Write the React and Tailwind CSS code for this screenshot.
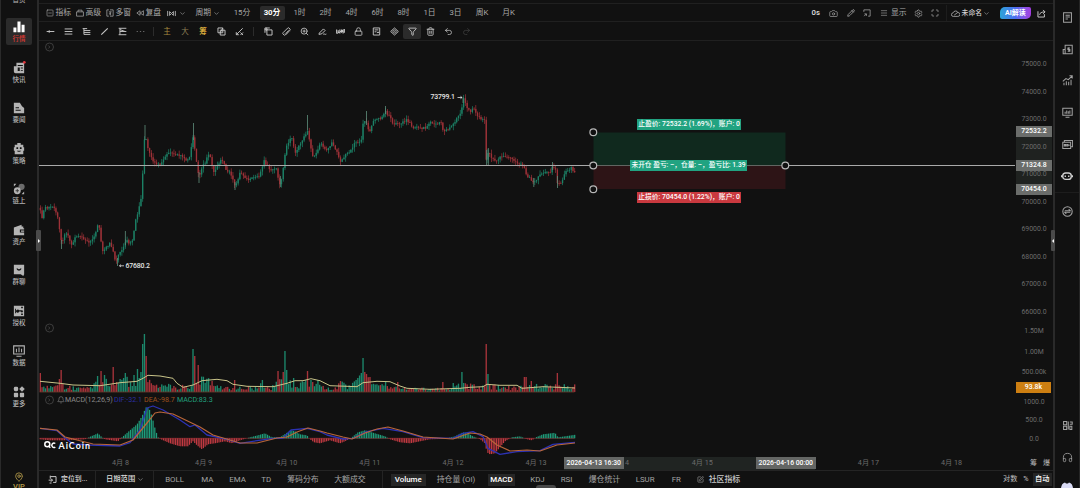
import React from 'react'
import {
  Bell, Camera, ChevronDown, Funnel, Headphones, Lock, MapPin, Maximize, Menu, Pencil,
  Redo2, Ruler, Settings, SquareMinus, SquarePen, Trash2, Undo2, ZoomIn,
} from 'lucide-react'

// ─── Helpers ──────────────────────────────────────────────────────────────────
const GREEN = '#1f9e7c'
const RED = '#c23a42'
const STEP = 1.735

const lerp = (pts, x) => {
  if (x <= pts[0][0]) return pts[0][1]
  for (let i = 1; i < pts.length; i++) {
    if (x <= pts[i][0]) {
      const [x0, y0] = pts[i - 1]
      const [x1, y1] = pts[i]
      return y0 + ((y1 - y0) * (x - x0)) / (x1 - x0)
    }
  }
  return pts[pts.length - 1][1]
}

const rand = (n) => {
  const v = Math.sin(n * 12.9898 + 4.137) * 43758.5453
  return v - Math.floor(v)
}

const toPoints = (pts) => pts.map((p) => p.join(',')).join(' ')

// ─── Series ───────────────────────────────────────────────────────────────────
const price = [
  [40, 208], [41.7, 218], [45, 207], [48, 209], [51.7, 205], [55, 208], [58, 220], [61.7, 245], [65, 232], [67.5, 234],
  [71.5, 246], [75, 238], [80, 236], [85, 240], [90, 242], [93, 238], [97.7, 226], [99.5, 227], [102, 251], [106.5, 247],
  [110, 242], [113, 252], [116, 262], [119, 253], [123, 248], [127, 240], [129, 245], [132.5, 240], [135, 223], [138, 213],
  [141.5, 195], [143, 167], [145, 127], [146.7, 146], [150, 153], [153, 161], [158, 165], [161.5, 163], [165, 156],
  [170, 153], [176.5, 155], [181.7, 156], [186.5, 161], [190, 156], [193.5, 133], [195.5, 157], [199, 179], [201.5, 168],
  [205, 163], [209.5, 152], [213.5, 172], [216.5, 167], [221.5, 158], [226, 169], [230, 173], [235, 186], [240, 173],
  [248, 180], [255, 176], [260, 175], [264, 161], [270, 170], [276, 168], [280, 185], [282.5, 173], [286, 147],
  [291.5, 137], [295.5, 153], [300, 143], [304, 137], [307.5, 131], [310, 145], [312.5, 157], [316.5, 152], [320.5, 143],
  [326, 152], [332.5, 142], [337, 152], [341, 162], [345, 155], [350, 152], [355, 143], [361.5, 140], [363.5, 120],
  [367, 123], [369, 135], [372.5, 122], [380, 118], [385.5, 112], [390, 117], [393, 124], [401.5, 124], [406.5, 119],
  [413, 127], [420, 128], [426.5, 128], [430, 123], [441, 123], [443.5, 131], [448, 129], [453.5, 123], [458, 117],
  [461.5, 111], [463.5, 99], [466.5, 107], [469.5, 112], [474, 108], [478.5, 118], [485, 119], [486, 160], [487.5, 152],
  [491.5, 157], [496.5, 161], [500, 156], [510, 157], [518.5, 163], [523.5, 166], [526.5, 175], [533.5, 183], [540, 175],
  [546.5, 171], [550.5, 173], [552.5, 166], [555.5, 168], [557.5, 185], [561.5, 183], [565, 172], [571.5, 168], [574.5, 173],
]

const longWicks = [
  [193.5, 123, 140], [307.5, 115, 130], [366.5, 111, 125], [385.5, 106, 114], [463, 97, 103], [486.6, 150, 166],
  [488.3, 148, 165], [199, 172, 183], [125.4, 231, 245], [61.5, 240, 249], [280.4, 176, 187], [117.5, 258, 266],
  [235, 182, 190], [552.5, 162, 170], [557.5, 176, 188], [533.8, 178, 187], [145, 125, 140],
]

const volumeBase = [
  [40, 6], [60, 7], [66, 6], [80, 3.5], [90, 4], [98, 10], [115, 10], [125, 11], [138, 13], [147, 10], [160, 6.5], [190, 5],
  [193, 13], [200, 12], [212, 10], [225, 4], [240, 5], [255, 4], [262, 9], [270, 4], [280, 10], [300, 9], [312, 9],
  [325, 4], [335, 5], [342, 9], [350, 5], [358, 13], [368, 14], [375, 7], [385, 6], [398, 4], [425, 3.5], [450, 4],
  [465, 8], [478, 5], [490, 6], [505, 5], [520, 4], [526, 9], [535, 6], [545, 6], [556, 6], [575, 6],
]

// x, height, 1 = up
const volumeSpikes = [
  [40, 19, 0], [60, 13, 0], [61.7, 22, 0], [98.3, 16, 1], [101.5, 21, 0], [104, 17, 1], [113.5, 25, 0], [120, 13, 1],
  [126, 19, 1], [134, 17, 1], [137, 23, 1], [141.2, 20, 1], [142.9, 48, 1], [144.6, 58, 1], [146.4, 36, 0],
  [193.5, 43, 1], [195.2, 36, 0], [198.5, 27, 0], [234, 12, 0], [262, 12, 1], [278, 21, 0], [283.6, 20, 0],
  [285.3, 41, 1], [287, 22, 1], [293, 14, 1], [307.5, 21, 0], [311, 12, 1], [318, 12, 1], [341, 11, 0], [357, 14, 1],
  [361, 19, 1], [362.7, 34, 1], [364.5, 20, 0], [366.5, 18, 0], [369.5, 15, 0], [385, 10, 1], [398, 10, 0], [443, 10, 0],
  [454, 9, 1], [461.7, 20, 1], [486, 48, 0], [487.8, 18, 1], [523.8, 15, 0], [525.5, 15, 0], [531, 11, 0], [557, 19, 0],
]

const volumeMa = [
  [40, 381.3], [60, 383.3], [73, 385], [100, 385.7], [120, 382.7], [137, 381.3], [143, 378.3], [148, 375.3], [160, 376],
  [173, 378.3], [177, 383.3], [183, 387.3], [193, 385], [202, 380.7], [217, 379.3], [227, 380.7], [233, 384.3],
  [247, 386.3], [273, 386.7], [287, 383.3], [295, 380.7], [303, 380.7], [311, 378.7], [320, 380.7], [330, 385.7],
  [357, 386.7], [363, 382.7], [377, 381.3], [390, 381.7], [400, 386], [407, 388.3], [430, 389.3], [460, 388.3],
  [470, 387.3], [483, 386.7], [487, 384.3], [500, 385.3], [517, 385.3], [522, 388.3], [543, 386.7], [575, 388],
]

const histogram = [
  [40, -1], [50, -2], [63, -2], [85, -1], [90, 1.5], [98, 5], [102, 1], [105, -1], [118, -3], [122, 1], [130, 8], [137, 14],
  [142, 22], [146, 31], [149, 30], [152, 22], [155, 10], [158, 1], [161, -1], [170, -5], [180, -8], [188, -8], [193, -3],
  [197, -7], [202, -11], [208, -6], [215, -5], [225, -3], [232, -5], [240, -2], [250, 1], [258, 3], [265, 5], [272, 1],
  [280, 1], [286, 5], [291, 8], [295, 7], [300, 4], [307, 3], [310, -1], [314, -4], [320, -5], [330, -2], [340, -5],
  [345, -3], [352, 1], [358, 6], [365, 8], [375, 5], [385, 2], [390, -1], [400, -4], [410, -5], [420, -3], [430, -1],
  [445, -0.5], [455, 2], [463, 6], [468, 5], [473, 2], [480, -1], [485, -5], [487, -14], [490, -16], [495, -15], [500, -9],
  [505, -3], [512, 1], [520, 2], [527, -1], [532, -2], [536, 1], [543, 4], [555, 5.5], [558, 1], [565, 2], [575, 3.5],
]

const dif = [
  [40, 428.3], [57, 430.7], [65, 438], [73, 444], [90, 445], [120, 446], [130, 442.7], [140, 430], [147, 408], [153, 406],
  [163, 410], [180, 420], [190, 426.7], [195, 425], [207, 435], [227, 439.3], [240, 443.3], [257, 440.7], [273, 438.3],
  [283, 438], [291, 430], [307, 428.3], [320, 431.7], [327, 435], [343, 439], [353, 438.3], [367, 431.7],
  [383, 428.3], [403, 431.7], [423, 437.7], [453, 438.3], [463, 433.3], [473, 431.7], [483, 436.7], [488, 448.3],
  [500, 454.3], [517, 451.7], [540, 450.7], [553, 444.3], [575, 442.3],
]

const dea = [
  [40, 428.3], [57, 430], [65, 437], [93, 444], [120, 445], [133, 440], [147, 423], [155, 413], [160, 412], [173, 414],
  [200, 427], [213, 435], [240, 443], [257, 443], [277, 438], [287, 437], [297, 432], [308, 428], [320, 431], [327, 433],
  [343, 437], [352, 439], [365, 433], [377, 429], [388, 427], [403, 431], [423, 437], [453, 439], [470, 433], [480, 434],
  [487, 437], [497, 445], [510, 451], [527, 450], [540, 451], [557, 445], [575, 443],
]

const bars = Array.from({ length: 309 }, (_, i) => {
  const x = 40.3 + i * STEP
  const open = lerp(price, x - STEP) + (rand(i) - 0.5) * 2.6
  const close = lerp(price, x) + (rand(i + 1) - 0.5) * 2.6
  const spike = volumeSpikes.find((s) => Math.abs(s[0] - x) < STEP / 2)
  const up = close <= open
  return {
    x,
    up,
    top: Math.min(open, close),
    bottom: Math.max(open, close),
    high: Math.min(open, close) - rand(i + 500) * 4.2,
    low: Math.max(open, close) + rand(i + 900) * 4.2,
    vol: spike ? spike[1] : lerp(volumeBase, x) * (0.4 + rand(i + 77) * 0.95),
    volUp: spike ? Boolean(spike[2]) : up,
    hist: lerp(histogram, x),
  }
})

// ─── Icons ────────────────────────────────────────────────────────────────────
const MiniIcon = ({ className = 'size-[9px]', width = 1.3, children }) => (
  <svg viewBox="0 0 14 14" fill="none" stroke="currentColor" strokeWidth={width} className={`shrink-0 ${className}`}>{children}</svg>
)

const AdvancedIcon = () => (
  <MiniIcon className="size-[8px]"><path d="M1 5h12v7.500H1zM3.500 5V2h7v3" /></MiniIcon>
)

const MultiIcon = () => (
  <MiniIcon className="size-[8px]"><path d="M5 1.500H1.500v11H5M7 1.500h5.500v11H7M5 5h5M5 8.500h4M7.500 5v6" /></MiniIcon>
)

const ReplayIcon = () => (
  <MiniIcon className="size-[8px]"><path d="M7 3L1.500 7L7 11zM13 3L7.500 7L13 11z" /></MiniIcon>
)

const CandleIcon = () => (
  <MiniIcon className="size-[9px]" width={1.5}><path d="M1 3v8M13 3v8M4 4v6l3-3zM10 4v6L7 7z" /></MiniIcon>
)

// ─── Left navigation ──────────────────────────────────────────────────────────
const navShapes = {
  market: <path d="M.5 7.500H4V13H.5zM5.200.5h3.600V13H5.200zM10 4.500h3.500V13H10z" />,
  news: (
    <>
      <path fillRule="evenodd" d="M4 1h9v12H3a2 2 0 0 1-2-2V5h3zM5.500 3.500v1.200h6V3.500zM5.500 6.500v4h2.400v-4zm3.600 0v1h2.400v-1zm0 3v1h2.400v-1z" />
      <circle cx="13.200" cy=".3" r="1.600" fill="#e0363c" />
    </>
  ),
  article: <path fillRule="evenodd" d="M1 1h7l2.500 4L13 7v6H1zM3 6v1.200h4V6zm0 3v1.200h6V9z" />,
  robot: <path fillRule="evenodd" d="M5 0h4v2h3v3h1v4h-1v4H2V9H1V5h1V2h3zM4 5v2h2V5zm4 0v2h2V5zM4.500 9c1 1.800 4 1.800 5 0z" />,
  chain: (
    <>
      <circle cx="10" cy="4.500" r="3.600" fill="#6c6c6c" />
      <circle cx="5" cy="9" r="4" />
      <path d="M1 1h3L1 4zM13 13h-3l3-3z" />
      <path d="M3 9h4M5 7v4" stroke="#333" strokeWidth="1" />
    </>
  ),
  wallet: <path fillRule="evenodd" d="M1 4l9-3v2h2v2h1v8H1zm7 2.500V10h5V6.500zm1.300 1.100h3.700v1.300H9.300z" />,
  chat: <path fillRule="evenodd" d="M1 1h12v11l-1 2-3-2H1zM4 5.600c1.500 3 4.500 3 6 0l-1-.6c-1 1.600-3 1.600-4 0z" />,
  grant: <path fillRule="evenodd" d="M1 1h12v12H1zM2.500 4.500v5h1v-5zm2.300.9a1.900 1.900 0 1 0 2.400 2.300H9l1.500 1.300 1.500-2-1.500-1H7.200a1.900 1.900 0 0 0-2.400-.6zM9.500 2v1.800h2V2zM9.500 10v1.600h2V10z" />,
  data: (
    <>
      <path d="M.8 1h12.400v9.500H.8z" fill="none" stroke="currentColor" strokeWidth="1.300" />
      <path d="M4 4.500v4M7 3v5.500M10 4.500v4M4 13h6" stroke="currentColor" strokeWidth="1.200" />
    </>
  ),
  more: (
    <>
      <rect x="1" y="1" width="5" height="5" rx="1.500" />
      <path d="M10.500.3l3.200 3.200-3.200 3.200-3.200-3.200z" />
      <rect x="1" y="8" width="5" height="5" rx="1" />
      <rect x="8" y="8" width="5" height="5" rx="1" />
    </>
  ),
}

const navItems = [
  ['market', '行情'], ['news', '快讯'], ['article', '要闻'], ['robot', '策略'], ['chain', '链上'],
  ['wallet', '资产'], ['chat', '群聊'], ['grant', '授权'], ['data', '数据'], ['more', '更多'],
]

const LeftNav = () => (
  <nav className="w-[37px] h-full shrink-0 border-l border-[#2a2a2a] flex flex-col items-center text-[#b4b4b4]">
    <div className="h-[18px] shrink-0 -mt-[7px] text-[6.500px] leading-[14px]">首页</div>
    <div className="flex flex-col mt-[7px] shrink-0">
      {navItems.map(([icon, label], i) => (
        <div
          key={icon}
          className={`w-[26px] h-[27px] mb-[13.500px] flex flex-col items-center rounded-[2px] ${i === 0 ? 'bg-[#2b2b2b] text-white' : ''}`}
        >
          <svg viewBox="0 0 14 14" fill="currentColor" className="size-[12px] mt-[3px] overflow-visible shrink-0">
            {navShapes[icon]}
          </svg>
          <span className={`text-[6.500px] leading-[9px] mt-[2px] font-medium ${i === 0 ? 'text-[#dc3a33]' : ''}`}>{label}</span>
        </div>
      ))}
    </div>
    <div className="mt-auto -mb-[3px] flex flex-col items-center text-[#b59b4a] shrink-0">
      <MapPin className="size-[10px]" strokeWidth={2} />
      <span className="text-[7.500px] leading-[9px] font-medium">VIP</span>
    </div>
  </nav>
)

// ─── Top toolbars ─────────────────────────────────────────────────────────────
const tools = [
  [<SquareMinus className="size-[8px]" strokeWidth={1.8} />, '指标', 'w-[30px]'],
  [<AdvancedIcon />, '高级', 'w-[30px]'],
  [<MultiIcon />, '多窗', 'w-[30px]'],
  [<ReplayIcon />, '复盘', 'w-[31px]'],
]

const periods = [
  ['15分', 'w-[31px]'], ['30分', 'w-[25px] mx-[2px] bg-[#2b2b2b] text-white font-bold rounded-[2px]'], ['1时', 'w-[26px]'],
  ['2时', 'w-[26px]'], ['4时', 'w-[26px]'], ['6时', 'w-[26px]'], ['8时', 'w-[26px]'], ['1日', 'w-[26px]'],
  ['3日', 'w-[26px]'], ['周K', 'w-[27px]'], ['月K', 'w-[26px]'],
]

const TopBar = () => (
  <div className="h-[19px] mt-[3px] pt-[1px] shrink-0 border-y border-[#202020] flex items-center justify-between text-[7.800px] text-[#a9a9a9] whitespace-nowrap">
    <div className="flex items-center pl-[6.500px] h-full">
      {tools.map(([icon, label, w]) => (
        <div key={label} className={`flex items-center gap-[2px] ${w}`}>
          {icon}
          {label}
        </div>
      ))}
      <div className="flex items-center gap-[3px] w-[29px]">
        <CandleIcon />
        <ChevronDown className="size-[7px]" />
      </div>
      <div className="flex items-center gap-[2px] w-[31px]">
        周期
        <ChevronDown className="size-[7px]" />
      </div>
      {periods.map(([label, cls]) => (
        <div key={label} className={`h-[14px] flex items-center justify-center ${cls}`}>{label}</div>
      ))}
    </div>
    <div className="flex items-center h-full pr-[7px]">
      <span className="w-[17.500px] font-medium text-[#dedede]">0s</span>
      <Camera className="size-[9px] mr-[9px]" strokeWidth={1.8} />
      <Pencil className="size-[8px] mr-[8px]" strokeWidth={2.4} />
      <MiniIcon className="size-[8px] mr-[9px]"><path d="M1.500 5V1.500h11v11H9M2 12.500l4-4M2.500 8.500H6V12" /></MiniIcon>
      <Menu className="size-[8px] mr-[3px]" strokeWidth={1.8} />
      显示
      <Settings className="size-[9px] ml-[7px] mr-[8px]" strokeWidth={1.8} />
      <Maximize className="size-[8px]" strokeWidth={2.2} />
      <div className="w-px h-full bg-[#1d1d1d] ml-[7px] mr-[4px]" />
      <MiniIcon className="size-[9px] mr-[2px]"><path d="M3.500 11.500a2.700 2.700 0 0 1-.3-5.400A4.200 4.200 0 0 1 11 5.500a3 3 0 0 1-.3 6zM5 9.500L11 5" /></MiniIcon>
      <span className="text-[6.800px] font-medium text-[#d2d2d2]">未命名</span>
      <ChevronDown className="size-[7px] ml-[1px]" />
      <div className="ml-[10px] mr-[6px] w-[31px] h-[12px] rounded-tl-[5px] rounded-br-[5px] rounded-tr-[2px] rounded-bl-[2px] bg-linear-to-r from-[#2aa3d8] via-[#4a6cf0] to-[#a43be0] text-white text-[7px] font-bold flex items-center justify-center">
        AI解读
      </div>
      <MiniIcon className="size-[9px] text-[#c8c8c8]" width={1.5}><path d="M1.500 3.500v9h10V8M4 9c.5-3 3-4.500 8.500-4.500M9.500 1.500l3 3-3 3" /></MiniIcon>
    </div>
  </div>
)

const lineTools = [
  <path d="M1 7h12M5 5v4" />,
  <path d="M1 3h12M1 7h12M1 11h12" />,
  <path d="M1 2.500h7M3 5.500h10M3 8.500h10M3 11.500h10M3 2.500v9" />,
  <path d="M2 12L12 2" strokeWidth="1.800" />,
  <path d="M1 2h12M3 2v10M3 7h10M1 12h12M3 4l8 3" />,
  <path d="M1 7h2M6 7h2M11 7h2" opacity=".5" />,
]

const DrawSlot = ({ children, active }) => (
  <div className={`w-[18px] h-[15px] flex items-center justify-center ${active ? 'bg-[#2b2b2b] rounded-[2px]' : ''}`}>{children}</div>
)

const DrawBar = () => (
  <div className="h-[19px] pt-[1px] shrink-0 border-b border-[#202020] flex items-center pl-[2px] text-[#c4c4c4] text-[7.500px]">
    {lineTools.map((shape, i) => (
      <DrawSlot key={i}>
        <MiniIcon width={1.5}>{shape}</MiniIcon>
      </DrawSlot>
    ))}
    <div className="w-px h-[9px] bg-[#2c2c2c] mx-[4px]" />
    <DrawSlot><span className="text-[#a88b3f]">主</span></DrawSlot>
    <DrawSlot><span className="text-[#8d7f55]">大</span></DrawSlot>
    <DrawSlot><span className="text-[#d6a93c] font-bold">筹</span></DrawSlot>
    <DrawSlot>
      <MiniIcon width={1.5}><path d="M1.500 1.500h7.500v7.500H1.500zM5 5h7.500v7.500H5zM9 1.500L5 9" /></MiniIcon>
    </DrawSlot>
    <DrawSlot>
      <MiniIcon width={1.5}><path d="M2 12L12 2M2 8v4h4M8.500 8.500l4 4M8.500 12.500l4-4" /></MiniIcon>
    </DrawSlot>
    <div className="w-px h-[9px] bg-[#2c2c2c] mx-[5px]" />
    <DrawSlot>
      <MiniIcon width={1.5}><path d="M4.500 4.500h8v8h-8zM1 3.500h5M3.500 1v5.500M9 1.500H1.500V9" /></MiniIcon>
    </DrawSlot>
    <DrawSlot><Ruler className="size-[9px] rotate-90" strokeWidth={2.4} /></DrawSlot>
    <DrawSlot><ZoomIn className="size-[9px]" strokeWidth={2.3} /></DrawSlot>
    <DrawSlot>
      <MiniIcon width={1.5}><path d="M2 9.500L8.500 3l2.500 2.500-5 5-4.500 1zM8 11.500c1.500-2 3 1 5-.5" /></MiniIcon>
    </DrawSlot>
    <DrawSlot>
      <MiniIcon width={1.7}><path d="M1 4v6M3.500 5v5M6 4v6M8.500 4v5M11 4v6M13 3v6M1 10L13 4" /></MiniIcon>
    </DrawSlot>
    <DrawSlot><Lock className="size-[9px]" strokeWidth={2.2} /></DrawSlot>
    <DrawSlot>
      <MiniIcon width={1.5}><path d="M2 1.500h10v11H2zM4 4.500h6M4 7.500h3M8 9.500l1.500-2 1.500 2" /></MiniIcon>
    </DrawSlot>
    <DrawSlot>
      <MiniIcon width={1.4}><path d="M1 7l6-5.500L13 7l-6 5.500zM7 4.500a2.500 2.500 0 1 0 .1 0zM7 6.500v1" /></MiniIcon>
    </DrawSlot>
    <DrawSlot active><Funnel className="size-[9px]" strokeWidth={2.4} /></DrawSlot>
    <DrawSlot><Trash2 className="size-[9px]" strokeWidth={2.3} /></DrawSlot>
    <DrawSlot><Undo2 className="size-[9px]" /></DrawSlot>
    <DrawSlot><Redo2 className="size-[9px] opacity-25" /></DrawSlot>
  </div>
)

// ─── Chart panes ──────────────────────────────────────────────────────────────
const PaneToggle = ({ cy }) => (
  <g fill="none" stroke="#474747" strokeWidth=".8">
    <circle cx="49.500" cy={cy} r="4" />
    <path d={`M48.300 ${cy - 1.5}l1.500 1.500l-1.500 1.500`} />
  </g>
)

const PriceTag = ({ className, children }) => (
  <div className={`absolute h-[11px] flex items-center justify-center font-medium text-white whitespace-nowrap ${className}`}>{children}</div>
)

const PricePane = () => (
  <div className="relative h-[281px] shrink-0 text-[6.800px]">
    <svg viewBox="39 41 976 281" className="w-[976px] h-[281px] block">
      <PaneToggle cy={47} />
      {bars.map((b) => (
        <g key={b.x} fill={b.up ? GREEN : RED} opacity=".8">
          <rect x={b.x - 0.3} y={b.high} width=".7" height={b.low - b.high} />
          <rect x={b.x - 0.65} y={b.top} width="1.350" height={Math.max(b.bottom - b.top, 0.8)} />
        </g>
      ))}
      {longWicks.map(([x, y0, y1]) => (
        <path key={x} d={`M${x} ${y0}V${y1}`} stroke="#5f8f7c" strokeWidth=".8" />
      ))}
      <rect x="593.500" y="132.500" width="192" height="33" fill="#10291e" />
      <rect x="593.500" y="165.500" width="192" height="23.500" fill="#2d1416" />
      <path d="M39 165.500h554M789 165.500h226" stroke="#a9a9a9" strokeWidth="1" />
      <path d="M597 165.500h185" stroke="#8f9a95" strokeWidth=".6" />
      <g fill="#111" stroke="#b8b8b8" strokeWidth="1.200">
        <circle cx="593.300" cy="132.300" r="3.400" />
        <circle cx="593.300" cy="165.500" r="3.400" />
        <circle cx="593.300" cy="189.200" r="3.400" />
        <circle cx="785.300" cy="165.500" r="3.400" />
      </g>
      <g fill="#e6e6e6" fontSize="6.900" fontWeight="500">
        <text x="430.500" y="99.300" textLength="24.500">73799.1</text>
        <text x="125.500" y="267.600" textLength="24.500">67680.2</text>
      </g>
      <path d="M457.500 97.500h4.500m-1.500-1.200l1.500 1.200l-1.500 1.200M124 265.800h-4.500m1.500-1.200l-1.500 1.200l1.500 1.200" fill="none" stroke="#e0e0e0" strokeWidth=".8" />
    </svg>
    <PriceTag className="left-[598px] top-[78px] w-[104px] bg-[#21a381]">止盈价: 72532.2 (1.69%)，账户: 0</PriceTag>
    <PriceTag className="left-[591px] top-[119px] w-[117px] bg-[#21a381] text-[6.700px]">未开仓 盈亏: –，仓量: –，盈亏比: 1.39</PriceTag>
    <PriceTag className="left-[598px] top-[150.500px] w-[104px] bg-[#c9393f]">止损价: 70454.0 (1.22%)，账户: 0</PriceTag>
  </div>
)

const VolumePane = () => (
  <svg viewBox="39 322 976 71" className="w-[976px] h-[71px] block shrink-0">
    <PaneToggle cy={328} />
    {bars.map((b) => (
      <rect key={b.x} x={b.x - 0.65} y={392 - b.vol} width="1.350" height={b.vol} fill={b.volUp ? GREEN : RED} opacity=".85" />
    ))}
    <path d="M39.500 392h535" stroke="#6b3a2c" strokeWidth=".8" />
    <polyline points={toPoints(volumeMa)} fill="none" stroke="#c9c489" strokeWidth="1" strokeLinejoin="round" />
  </svg>
)

const MacdPane = () => (
  <div className="relative h-[63px] shrink-0">
    <svg viewBox="39 393 976 63" className="w-[976px] h-[63px] block">
      <PaneToggle cy={400} />
      <path d="M39.500 438.300h535" stroke={RED} strokeWidth=".7" opacity=".7" />
      {bars.map((b) => (
        <rect
          key={b.x}
          x={b.x - 0.6}
          y={b.hist > 0 ? 438.3 - b.hist : 438.3}
          width="1.200"
          height={Math.abs(b.hist)}
          fill={b.hist > 0 ? GREEN : RED}
        />
      ))}
      <polyline points={toPoints(dif)} fill="none" stroke="#2c32b4" strokeWidth="1.300" strokeLinejoin="round" />
      <polyline points={toPoints(dea)} fill="none" stroke="#b8663a" strokeWidth="1.200" strokeLinejoin="round" />
      <g fill="none" stroke="#fff" strokeWidth="1.500">
        <circle cx="47.300" cy="444.300" r="2.500" />
        <path d="M48.500 446l1.800 1.800M55.300 443.500a2.200 2.200 0 1 0 0 3.600" />
      </g>
      <text x="58.500" y="449" fill="#fff" fontSize="8.800" fontWeight="700" fontFamily="Lato, Roboto, sans-serif" textLength="31.500">AiCoin</text>
    </svg>
    <div className="absolute left-[18px] top-[2px] h-[10px] flex items-center text-[7.100px] whitespace-nowrap text-[#8a8a8a]">
      <Bell className="size-[8px]" strokeWidth={1.8} />
      <span className="w-[49px]">MACD(12,26,9)</span>
      <span className="w-[30px] text-[#2a2fa0]">DIF:-32.1</span>
      <span className="w-[33px] text-[#a0521f]">DEA:-98.7</span>
      <span className="text-[#22a07e]">MACD:83.3</span>
    </div>
  </div>
)

// labels under the selected range give way to its two date tags
const days = [
  ['4月 8'], ['4月 9'], ['4月 10'], ['4月 11'], ['4月 12'], ['4月 13'], ['4', 'pl-[16px]'], ['4月 15'], [''], ['4月 17'], ['4月 18'],
]

const TimeAxis = () => (
  <div className="relative h-[14px] shrink-0 flex pl-[40px] text-[7.200px] text-[#6c6c6c]">
    <div className="absolute left-[525px] top-[0.500px] w-[251px] h-[13px] bg-[#202422]" />
    {days.map(([label, cls = ''], i) => (
      <div key={i} className={`relative w-[83.100px] pt-[1px] shrink-0 flex items-center justify-center ${cls}`}>{label}</div>
    ))}
    <PriceTag className="left-[525px] top-[1px] h-[12px] w-[59.500px] bg-[#646664] text-[6.800px]">2026-04-13 16:30</PriceTag>
    <PriceTag className="left-[717px] top-[1px] h-[12px] w-[59.500px] bg-[#646664] text-[6.800px]">2026-04-16 00:00</PriceTag>
  </div>
)

// ─── Value axis ───────────────────────────────────────────────────────────────
const priceLevels = ['75000.0', '74000.0', '73000.0', '72000.0', '71000.0', '70000.0', '69000.0', '68000.0', '67000.0', '66000.0']

const ValueAxis = () => (
  <div className="relative w-[38px] shrink-0 flex flex-col text-[6.900px] text-[#6c6c6c]">
    <div className="absolute left-[1px] top-[85px] w-[36px] h-[68px] bg-[#1f2220]" />
    <div className="relative h-[284px] pt-[9.500px] shrink-0">
      {priceLevels.map((p) => (
        <div key={p} className="h-[27.500px] flex items-center justify-center">{p}</div>
      ))}
    </div>
    <div className="h-[68px] -mt-[3.500px] shrink-0">
      {['1.50M', '1.00M', '500.00k'].map((v) => (
        <div key={v} className="h-[20.300px] flex items-center justify-center">{v}</div>
      ))}
    </div>
    <div className="h-[64px] pt-[3px] shrink-0">
      {['1000.0', '500.0', '0.0'].map((v) => (
        <div key={v} className="h-[18.500px] flex items-center justify-center">{v}</div>
      ))}
    </div>
    <div className="mt-auto h-[14px] flex items-center justify-center gap-[6px] pl-[12px] text-[7px] text-[#b8b8b8]">
      <span>筹</span>
      <span>爆</span>
    </div>
    <PriceTag className="left-[1px] top-[85px] w-[36px] bg-[#6b6d6b]">72532.2</PriceTag>
    <PriceTag className="left-[1px] top-[118.500px] w-[36px] bg-[#6b6d6b]">71324.8</PriceTag>
    <PriceTag className="left-[1px] top-[142.500px] w-[36px] bg-[#6b6d6b]">70454.0</PriceTag>
    <PriceTag className="left-[1px] top-[341px] w-[35px] bg-[#cd7f12]">93.8k</PriceTag>
  </div>
)

// ─── Indicator bar ────────────────────────────────────────────────────────────
const indicators = [
  ['BOLL', 'w-[36px]'], ['MA', 'w-[28px]'], ['EMA', 'w-[32px]'], ['TD', 'w-[26px]'], ['筹码分布', 'w-[47px]'], ['大额成交', 'w-[48px]'],
]

const subIndicators = [
  ['持仓量 (OI)', 'w-[51px]'], ['MACD', 'w-[27.500px] mr-[15px] justify-center bg-[#262626] text-white font-medium'],
  ['KDJ', 'w-[30.500px]'], ['RSI', 'w-[28px]'], ['爆仓统计', 'w-[47px]'], ['LSUR', 'w-[36px]'], ['FR', 'w-[25px]'],
]

const IndicatorBar = () => (
  <div className="relative h-[18px] shrink-0 border-t border-[#242424] flex items-center text-[7.900px] text-[#a4a4a4] whitespace-nowrap">
    <MiniIcon className="size-[9px] ml-[9px] mr-[4px] text-[#cfcfcf]" width={1.5}><path d="M4 2.500h8.500v9H8M3.500 5.500V1M1 8h6M4.500 5.500L7 8l-2.500 2.500M2.500 12.500h3" /></MiniIcon>
    <span className="w-[34px] font-medium text-[6.900px] text-[#dcdcdc]">定位到...</span>
    <div className="w-px h-full bg-[#242424]" />
    <span className="ml-[10px] text-[7.300px] font-medium text-[#dcdcdc]">日期范围</span>
    <ChevronDown className="size-[7px] ml-[2px] mr-[9px]" />
    <div className="w-px h-full bg-[#242424] mr-[11px]" />
    {indicators.map(([label, w]) => (
      <div key={label} className={`flex items-center shrink-0 ${w}`}>{label}</div>
    ))}
    <div className="w-px h-full bg-[#242424] mr-[7.500px]" />
    <div className="h-[12px] w-[35px] mr-[11px] flex items-center justify-center bg-[#262626] text-white font-medium">Volume</div>
    {subIndicators.map(([label, cls]) => (
      <div key={label} className={`h-[12px] flex items-center shrink-0 ${cls}`}>{label}</div>
    ))}
    <SquarePen className="size-[7px] mr-[5px]" />
    <span className="font-medium text-[#c8c8c8]">社区指标</span>
    <div className="ml-auto flex items-center text-[7.200px] text-[#c0c0c0]">
      <span className="mr-[6px]">对数</span>
      <span className="mr-[4px]">%</span>
      <span className="h-[13px] px-[2.500px] mr-[1px] flex items-center bg-[#242424] text-white font-medium">自动</span>
    </div>
    <div className="absolute left-[497px] bottom-0 w-[20px] h-[3px] rounded-t-[3px] bg-[#484848]" />
  </div>
)

// ─── Right rail ───────────────────────────────────────────────────────────────
const railIcons = [
  <path d="M2 1h10v12H2zM4.500 4h5.500M4.500 6.500h5.500M4.500 9h3" />,
  <path d="M4 1.500h9v11H1.500V7H4zM4 7v5.500M10 5H7.500v2H10v2.200H7.300M8.700 4v6" />,
  <path d="M2.500 13v-3M5.500 13V8M8.500 13V8.500M11.500 13V6M1 8l4-3.500 3 1.500 5-5M9.500 1H13v3.500" />,
  <path d="M1 1.500h12v9H1zM4 8.500V6M6 8.500V4.500M8 8.500V5.500M10 8.500V4.500M4.500 13h5" />,
  <path d="M1 4h10v8H1zM3 4V2h10.500v8H11M3 7h1.500v2H3zM6 7h1.500v2H6zM9 7v2" />,
]

const RightRail = () => (
  <aside className="w-[25px] h-full shrink-0 border-r border-[#262626] flex flex-col items-center text-[#a2a2a2]">
    <div className="flex flex-col items-center pt-[2px] shrink-0">
      {railIcons.map((shape, i) => (
        <div key={i} className="h-[31.600px] flex items-center justify-center">
          <MiniIcon className="size-[11px]">{shape}</MiniIcon>
        </div>
      ))}
      <div className="h-[31.600px] flex items-center justify-center text-[#d0d0d0]">
        <MiniIcon className="size-[12px]" width={1.6}>
          <rect x="2" y="3.500" width="10" height="7.500" rx="3.500" />
          <path d="M.6 6v2.500M13.400 6v2.500M5 6.300v1.800M9 6.300v1.800" />
        </MiniIcon>
      </div>
    </div>
    <div className="w-full h-px bg-[#1d1d1d] shrink-0" />
    <div className="h-[38px] flex items-center justify-center shrink-0">
      <MiniIcon className="size-[11px]">
        <circle cx="7" cy="7" r="6" />
        <path d="M3.500 6h7L8.500 4M10.500 8h-7l2 2" />
      </MiniIcon>
    </div>
    <div className="mt-auto h-[32px] flex items-center shrink-0">
      <MiniIcon className="size-[11px]"><path d="M2 2h4v4H2zM2 8h4v4H2zM8 2v10M10 2.500h3v3h-3M10 8h2.500v4H10z" /></MiniIcon>
    </div>
    <div className="h-[32px] flex items-center shrink-0">
      <Headphones className="size-[11px]" strokeWidth={1.8} />
    </div>
    <svg viewBox="0 0 12 6" className="w-[12px] h-[6px] mt-[8.500px] shrink-0">
      <path d="M0 6C.5 3 1.500 1 4 .5L5 1.500h2L8 .5c2.500.5 3.500 2.500 4 5.500z" fill="#d9dbf5" />
    </svg>
  </aside>
)

// ─── App ──────────────────────────────────────────────────────────────────────
const App = () => (
  <div className="w-[1080px] h-[488px] overflow-hidden bg-[#111111] flex font-['Roboto','Noto_Sans_CJK_SC',sans-serif]">
    <LeftNav />
    <div className="relative w-[2px] h-full shrink-0 bg-[#2a2a2a]">
      <div className="absolute -left-px top-[230px] w-[5px] h-[21px] rounded-[1px] bg-[#4a4a4a] flex items-center justify-center">
        <div className="border-y-[2px] border-y-transparent border-l-[2px] border-l-white" />
      </div>
    </div>
    <main className="w-[1014px] h-full shrink-0 flex flex-col">
      <TopBar />
      <DrawBar />
      <div className="flex flex-1 min-h-0 text-[6.900px]">
        <div className="w-[976px] shrink-0 flex flex-col">
          <PricePane />
          <VolumePane />
          <MacdPane />
          <TimeAxis />
        </div>
        <ValueAxis />
      </div>
      <IndicatorBar />
    </main>
    <div className="relative w-[2px] h-full shrink-0 bg-[#2a2a2a]">
      <div className="absolute -left-[2px] top-[230px] w-[4px] h-[21px] rounded-[1px] bg-[#4a4a4a] flex items-center justify-center">
        <div className="border-y-[2px] border-y-transparent border-r-[2px] border-r-white" />
      </div>
    </div>
    <RightRail />
  </div>
)

export default App
